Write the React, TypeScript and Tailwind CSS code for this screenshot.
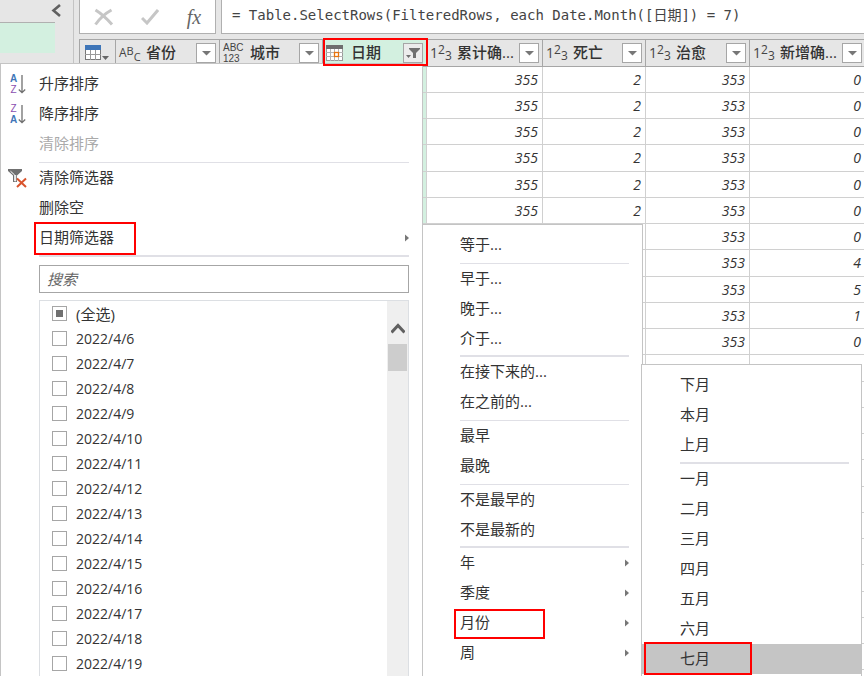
import React from "react";

const ui = "font-['Open_Sans','Noto_Sans_CJK_SC',sans-serif]";
const mono = "font-['DejaVu_Sans_Mono','Noto_Sans_CJK_SC',monospace]";

/* ---------- icons ---------- */

function NumberIcon() {
  return (
    <span aria-hidden="true" className="flex w-5 shrink-0 items-center text-[14px] font-normal leading-none text-[#444]">
      <span>1</span>
      <sup className="-top-[3px] text-[12px] leading-none">2</sup>
      <sub className="-bottom-[3px] text-[12px] leading-none">3</sub>
    </span>
  );
}

function TextIcon() {
  return (
    <span aria-hidden="true" className="flex w-5 shrink-0 items-center text-[12px] font-normal leading-none text-[#444]">
      <span>A</span>
      <sup className="-top-[3px] text-[11px] leading-none">B</sup>
      <sub className="-bottom-[3px] text-[11px] leading-none">C</sub>
    </span>
  );
}

function AnyIcon() {
  return (
    <span
      aria-hidden="true"
      className="flex w-5 shrink-0 flex-col text-left font-['Liberation_Sans',sans-serif] text-[10px] font-normal leading-[11px] text-[#444]"
    >
      <span>ABC</span>
      <span>123</span>
    </span>
  );
}

function CalendarIcon() {
  return (
    <svg width="17" height="16" viewBox="0 0 17 16" className="mr-px shrink-0" aria-hidden="true">
      <rect x="0.5" y="0.5" width="16" height="15" fill="#fff" stroke="#9a9a9a" />
      <rect width="17" height="4" fill="#6e6e6e" />
      <path d="M4.500 4v12M8.500 4v12M12.500 4v12M0 7.500h17M0 11.500h17" stroke="#b4b4b4" />
      <rect x="8.500" y="7.500" width="4" height="4" fill="#fff" stroke="#e8730c" strokeWidth="1.300" />
    </svg>
  );
}

function TableIcon() {
  return (
    <svg width="25" height="16" viewBox="0 0 25 16" aria-hidden="true">
      <rect x="0.5" y="0.5" width="15" height="14" fill="#fff" stroke="#777" />
      <rect width="16" height="5" fill="#3f76b8" />
      <path d="M5.500 5v10M10.500 5v10M0 9.500h16" stroke="#999" />
      <path d="M17 11h7l-3.500 4z" fill="#666" />
    </svg>
  );
}

function ArrowRight() {
  return (
    <svg width="4" height="8" viewBox="0 0 4 8" aria-hidden="true">
      <path d="M0 0.500v7l4-3.500z" fill="#777" />
    </svg>
  );
}

function SortIcon({ desc = false }: { desc?: boolean }) {
  const a = <span className="font-bold text-[#3f76b8]">A</span>;
  const z = <span className="text-[#8a4fb0]">Z</span>;
  return (
    <span aria-hidden="true" className="flex items-center pl-px">
      <span className="flex w-[9px] flex-col items-center font-['Liberation_Sans',sans-serif] text-[10px] leading-[11px]">
        {desc ? z : a}
        {desc ? a : z}
      </span>
      <svg width="8" height="19" viewBox="0 0 8 19" fill="none">
        <path d="M4 0v18M0.800 14.500L4 17.700l3.200-3.200" stroke="#707070" strokeWidth="1.300" />
      </svg>
    </span>
  );
}

function ClearFilterIcon() {
  return (
    <svg width="19" height="19" viewBox="0 0 19 19" fill="none" aria-hidden="true">
      <path d="M0 0h14v2L9 6.500V13H5V6.500L0 2z" fill="#707070" />
      <path d="M2.500 2.200L6.700 6v6h1V6" stroke="#fff" strokeWidth="1" />
      <path d="M9 9.500l9 8.500M18 9.500l-9 8.500" stroke="#d9532c" strokeWidth="2" />
    </svg>
  );
}

/* ---------- grid ---------- */

type Column = { name: string; icon: React.ReactNode; width: string; active?: boolean };

const columns: Column[] = [
  { name: "省份", icon: <TextIcon />, width: "w-[104px]" },
  { name: "城市", icon: <AnyIcon />, width: "w-[103px]" },
  { name: "日期", icon: <CalendarIcon />, width: "w-[104px]", active: true },
  { name: "累计确...", icon: <NumberIcon />, width: "w-[116px]" },
  { name: "死亡", icon: <NumberIcon />, width: "w-[103px]" },
  { name: "治愈", icon: <NumberIcon />, width: "w-[104px]" },
  { name: "新增确...", icon: <NumberIcon />, width: "w-[116px]" },
];

const added = ["0", "0", "0", "0", "0", "0", "0", "4", "5", "1", "0"];
const emptyRows = 13;

const rows: string[][] = [
  ...added.map((n) => ["", "", "", "355", "2", "353", n]),
  ...Array.from({ length: emptyRows }, () => ["", "", "", "", "", "", ""]),
];

function FilterButton({ column }: { column: Column }) {
  return (
    <button
      type="button"
      aria-label={`${column.name} 筛选`}
      className={`flex size-5 shrink-0 items-center justify-center border border-[#a6a6a6] ${
        column.active ? "bg-[#ececec]" : "bg-white"
      }`}
    >
      {column.active ? (
        <svg width="14" height="12" viewBox="0 0 14 12" fill="#707070" aria-hidden="true">
          <path d="M3 1h11v1L10 6v5H7V6L3 2zM0 8h5l-2.500 3z" />
        </svg>
      ) : (
        <svg width="9" height="5" viewBox="0 0 9 5" aria-hidden="true">
          <path d="M0 0h9L4.500 4.500z" fill="#777" />
        </svg>
      )}
    </button>
  );
}

function DataGrid() {
  return (
    <table className="w-[787px] table-fixed border-separate border-spacing-0 border-l border-t border-[#a6a6a6] bg-white">
      <thead>
        <tr>
          <th className="h-[27px] w-9 border-b border-r border-[#a6a6a6] bg-[#e6e6e6] p-0">
            <button type="button" aria-label="表格选项" className="flex w-full justify-center">
              <TableIcon />
            </button>
          </th>
          {columns.map((c) => (
            <th
              key={c.name}
              className={`h-[27px] border-b border-r border-[#a6a6a6] p-0 ${c.width} ${
                c.active ? "bg-[#d3f0e0]" : "bg-[#e6e6e6]"
              }`}
            >
              <div className="flex items-center pl-[3px] pr-[3px]">
                {c.icon}
                <span className="min-w-0 flex-1 whitespace-nowrap pb-0.5 pl-[7px] text-left text-[15px] font-medium leading-5 text-[#333]">
                  {c.name}
                </span>
                <FilterButton column={c} />
              </div>
            </th>
          ))}
        </tr>
      </thead>
      <tbody>
        {rows.map((r, i) => (
          <tr key={i} className="h-[26px] nth-[4n]:h-[27px]">
            <td className="border-b border-r border-[#d0d0d0] p-0" />
            {r.map((v, j) => (
              <td
                key={j}
                className={`border-b border-r border-[#d0d0d0] p-0 pr-1 text-right text-[14px] italic leading-5 text-[#333] ${
                  j === 2 ? "bg-[#d3f0e0]" : ""
                }`}
              >
                {v}
              </td>
            ))}
          </tr>
        ))}
      </tbody>
    </table>
  );
}

/* ---------- formula bar ---------- */

function FormulaBar() {
  return (
    <div className="flex h-[34px] gap-[5px]">
      <div className="flex w-[137px] items-center justify-around border border-t-0 border-[#b0b0b0] bg-white">
        <button type="button" aria-label="取消">
          <svg width="20" height="18" viewBox="0 0 20 18" fill="none" aria-hidden="true">
            <path d="M1.500 2C8 6 14 12 18 16.500M17.500 2C12 5 6 10 1.500 16.500" stroke="#c6c6c6" strokeWidth="3" />
          </svg>
        </button>
        <button type="button" aria-label="确认">
          <svg width="18" height="16" viewBox="0 0 18 16" fill="none" aria-hidden="true">
            <path d="M1 9l5 5L17 1" stroke="#c6c6c6" strokeWidth="3" />
          </svg>
        </button>
        <button
          type="button"
          aria-label="插入函数"
          className="font-['Liberation_Serif',serif] text-[20px] italic leading-6 text-[#666]"
        >
          fx
        </button>
      </div>
      <input
        aria-label="公式"
        defaultValue="= Table.SelectRows(FilteredRows, each Date.Month([日期]) = 7)"
        className={`min-w-0 flex-1 border border-r-0 border-t-0 border-[#b0b0b0] bg-white pb-0.5 pl-2.5 text-[14px] text-[#444] outline-none ${mono}`}
      />
    </div>
  );
}

/* ---------- menus ---------- */

const itemText = "text-[15px] leading-5 text-[#333]";

function FilterMenu() {
  const dates = Array.from({ length: 14 }, (_, i) => `2022/4/${i + 6}`);
  return (
    <div className="absolute bottom-0 left-0 top-[63px] flex w-[423px] flex-col border border-b-0 border-[#c4c4c4] bg-white pt-[5px]">
      <MainItem label="升序排序" icon={<SortIcon />} />
      <MainItem label="降序排序" icon={<SortIcon desc />} />
      <MainItem label="清除排序" disabled />
      <hr className="ml-[38px] mr-[13px] mt-[3px] mb-0 border-[#e0e0e6]" />
      <MainItem label="清除筛选器" icon={<ClearFilterIcon />} />
      <MainItem label="删除空" />
      <MainItem label="日期筛选器" marked arrow />
      <hr className="ml-[38px] mr-[13px] mt-0.5 mb-0 border-t-2 border-[#e0e0e6]" />
      <input
        type="text"
        aria-label="搜索"
        placeholder="搜索"
        className="ml-[38px] mr-[13px] mt-2 h-7 shrink-0 border border-[#a6a6a6] px-[7px] text-[15px] italic outline-none placeholder:text-[#666]"
      />
      <div className="ml-[38px] mr-[13px] mt-[7px] flex min-h-0 flex-1 overflow-hidden border border-b-0 border-[#dcdfe3]">
        <ul className="flex-1 pl-3">
          <li>
            <label className={`flex h-[25px] items-center gap-[9px] ${itemText}`}>
              <input
                type="checkbox"
                className="size-[15px] appearance-none border border-[#a6a6a6] bg-[#707070] bg-clip-content p-[3px]"
              />
              (全选)
            </label>
          </li>
          {dates.map((d) => (
            <li key={d}>
              <label className="flex h-[25px] items-center gap-[9px] text-[14px] leading-5 text-[#333]">
                <input type="checkbox" className="size-[15px] appearance-none border border-[#a6a6a6] bg-white" />
                {d}
              </label>
            </li>
          ))}
        </ul>
        <div className="flex w-[21px] flex-col items-center bg-[#efefef] pt-[21px]">
          <button type="button" aria-label="向上滚动">
            <svg width="14" height="12" viewBox="0 0 14 12" fill="none" aria-hidden="true" className="block">
              <path d="M0.500 10.500L7 3.500l6.500 7" stroke="#606060" strokeWidth="3" />
            </svg>
          </button>
          <div className="mt-[10px] h-[27px] w-[19px] bg-[#cdcdcd]" />
        </div>
      </div>
    </div>
  );
}

function MainItem(props: {
  label: string;
  icon?: React.ReactNode;
  disabled?: boolean;
  marked?: boolean;
  arrow?: boolean;
}) {
  return (
    <button
      type="button"
      disabled={props.disabled}
      className="relative flex h-[30px] shrink-0 items-center pl-[7px] pr-[13px] text-left"
    >
      <span className="w-[31px]">{props.icon}</span>
      <span className={`flex-1 pb-0.5 text-[15px] leading-5 ${props.disabled ? "text-[#aaa]" : "text-[#333]"}`}>
        {props.label}
      </span>
      {props.arrow && <ArrowRight />}
      {props.marked && <span className="absolute -bottom-0.5 -top-px left-[33px] w-[102px] border-2 border-[#f00]" />}
    </button>
  );
}

type Entry = { label: string; arrow?: boolean; marked?: boolean };

const dateGroups: { items: Entry[]; thick?: boolean }[] = [
  { items: [{ label: "等于..." }] },
  { items: [{ label: "早于..." }, { label: "晚于..." }, { label: "介于..." }], thick: true },
  { items: [{ label: "在接下来的..." }, { label: "在之前的..." }] },
  { items: [{ label: "最早" }, { label: "最晚" }] },
  { items: [{ label: "不是最早的" }, { label: "不是最新的" }], thick: true },
  {
    items: [
      { label: "年", arrow: true },
      { label: "季度", arrow: true },
      { label: "月份", arrow: true, marked: true },
      { label: "周", arrow: true },
    ],
  },
];

function DateMenu() {
  return (
    <div className="absolute bottom-0 left-[422px] top-[224px] w-[221px] border border-b-0 border-[#c4c4c4] bg-white pl-[37px] pr-[13px] pt-[5px]">
      {dateGroups.map((g, i) => (
        <div
          key={i}
          className={`border-[#e0e0e6] last:border-0 ${g.thick ? "border-b-2 pb-px" : "border-b pb-[3px]"}`}
        >
          {g.items.map((it) => (
            <button
              key={it.label}
              type="button"
              className={`relative flex h-[30px] w-full items-center justify-between text-left ${itemText}`}
            >
              <span className="pb-0.5">{it.label}</span>
              {it.arrow && <ArrowRight />}
              {it.marked && <span className="absolute -bottom-px -left-1.5 top-px w-[91px] border-2 border-[#f00]" />}
            </button>
          ))}
        </div>
      ))}
    </div>
  );
}

function MonthMenu() {
  const relative = ["下月", "本月", "上月"];
  const months = ["一月", "二月", "三月", "四月", "五月", "六月", "七月"];
  const row = `relative flex h-[30px] w-full items-center pb-0.5 pl-[38px] text-left ${itemText}`;
  return (
    <div className="absolute bottom-0 left-[641px] top-[364px] w-[221px] border border-b-0 border-[#c4c4c4] bg-white pt-[5px]">
      {relative.map((m) => (
        <button key={m} type="button" className={row}>
          {m}
        </button>
      ))}
      <hr className="ml-[38px] mr-3 mt-0.5 mb-0 border-t-2 border-[#e0e0e6]" />
      {months.map((m) => (
        <button key={m} type="button" className={`${row} ${m === "七月" ? "bg-[#c5c5c5]" : ""}`}>
          {m}
          {m === "七月" && (
            <span className="absolute -bottom-px -top-0.5 left-0.5 w-[108px] border-2 border-[#f00]" />
          )}
        </button>
      ))}
    </div>
  );
}

/* ---------- page ---------- */

export default function App() {
  return (
    <div className={`relative flex h-screen overflow-hidden bg-[#e6e6e6] ${ui}`}>
      <aside className="w-[74px] shrink-0 border-r border-[#c4c4c4]">
        <div className="flex h-[23px] w-[55px] border-b border-[#b0b0b0]">
          <button type="button" aria-label="折叠查询窗格" className="ml-[51px] mt-1 h-[13px] shrink-0">
            <svg width="10" height="13" viewBox="0 0 10 13" fill="none" aria-hidden="true" className="block">
              <path d="M9 1L2.500 6.500L9 12" stroke="#606060" strokeWidth="2.600" />
            </svg>
          </button>
        </div>
        <div className="h-[30px] w-[55px] bg-[#d3f0e0]" />
      </aside>
      <main className="min-w-0 flex-1 overflow-hidden pl-[5px]">
        <FormulaBar />
        <div className="mt-[5px]">
          <DataGrid />
        </div>
      </main>
      <FilterMenu />
      <DateMenu />
      <MonthMenu />
      <div aria-hidden="true" className="pointer-events-none absolute left-[323px] top-[38px] h-7 w-[105px] border-2 border-[#f00]" />
    </div>
  );
}
